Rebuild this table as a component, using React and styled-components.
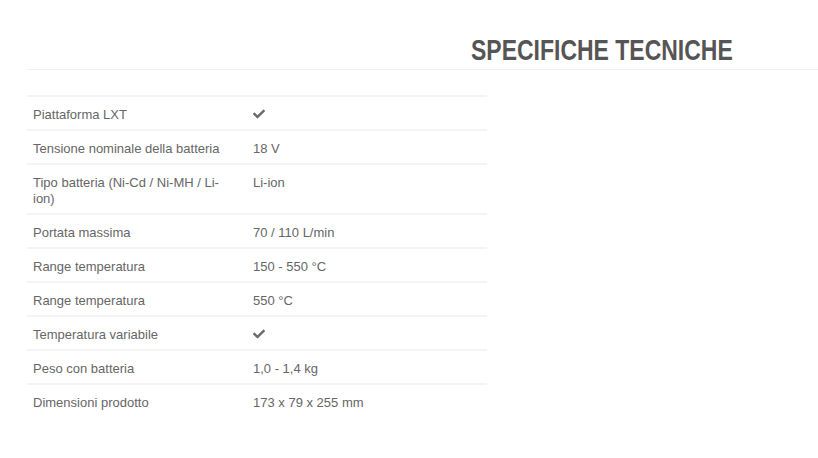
import React from "react";
import styled, { createGlobalStyle } from "styled-components";
import { FaCheck } from "react-icons/fa";

const Global = createGlobalStyle`
  html, body { margin: 0; padding: 0; background: #fff; }
  body { font-family: "Liberation Sans", Arial, sans-serif; }
`;

const Page = styled.div`
  padding: 31px 0 0 27px;
  width: 818px;
  box-sizing: border-box;
`;

const Header = styled.div`
  display: flex;
  border-bottom: 1px solid #f2f2f2;
  padding-left: 444px;
  height: 39px;
  box-sizing: border-box;
`;

const Title = styled.h2`
  margin: 0;
  display: inline-block;
  font-family: "Liberation Sans", Arial, sans-serif;
  font-weight: 700;
  font-size: 30px;
  line-height: 38px;
  color: #555;
  text-transform: uppercase;
  white-space: nowrap;
  transform: scaleX(0.766);
  transform-origin: left center;
`;

const Table = styled.table`
  margin-top: 25px;
  width: 460px;
  table-layout: fixed;
  border-collapse: collapse;
  font-size: 13px;
  color: #666;
`;

const Row = styled.tr`
  border-top: 2px solid #f4f4f4;
`;

const Cell = styled.td`
  padding: 10px 6px 6px 6px;
  padding-right: ${(p) => (p.$label ? "14px" : "6px")};
  line-height: 16px;
  vertical-align: top;
  width: ${(p) => (p.$label ? "200px" : "auto")};
`;

const Check = styled(FaCheck)`
  width: 12px;
  height: 12px;
  color: #6b6b6b;
  vertical-align: -1px;
`;

const rows = [
  ["Piattaforma LXT", null],
  ["Tensione nominale della batteria", "18 V"],
  ["Tipo batteria (Ni-Cd / Ni-MH / Li-ion)", "Li-ion"],
  ["Portata massima", "70 / 110 L/min"],
  ["Range temperatura", "150 - 550 °C"],
  ["Range temperatura", "550 °C"],
  ["Temperatura variabile", null],
  ["Peso con batteria", "1,0 - 1,4 kg"],
  ["Dimensioni prodotto", "173 x 79 x 255 mm"],
];

export default function App() {
  return (
    <>
      <Global />
      <Page>
        <Header>
          <Title>Specifiche tecniche</Title>
        </Header>
        <Table>
          <tbody>
            {rows.map(([k, v], i) => (
              <Row key={i}>
                <Cell $label>{k}</Cell>
                <Cell>{v === null ? <Check /> : v}</Cell>
              </Row>
            ))}
          </tbody>
        </Table>
      </Page>
    </>
  );
}
